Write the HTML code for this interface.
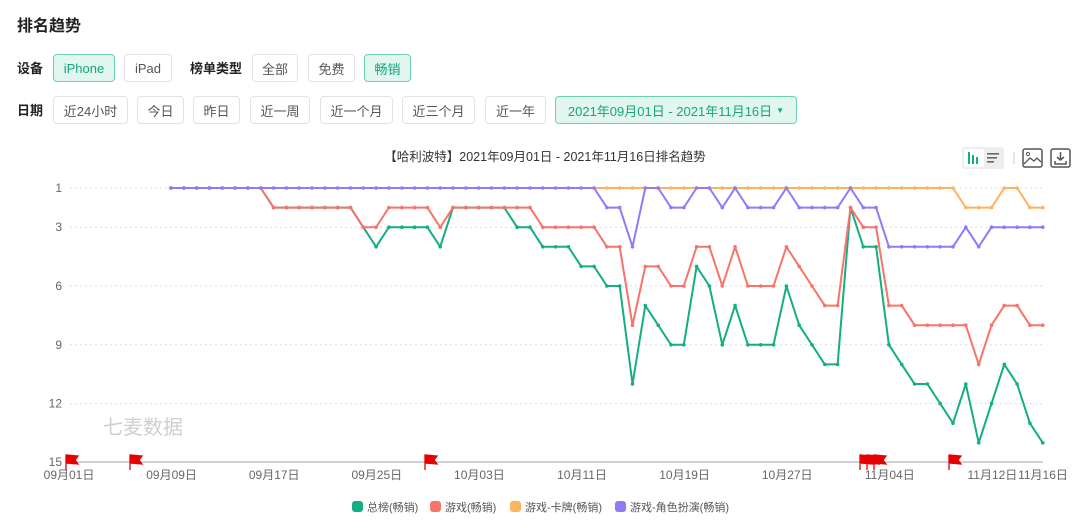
<!DOCTYPE html>
<html><head><meta charset="utf-8"><style>
*{margin:0;padding:0;box-sizing:border-box}
body{width:1080px;height:528px;background:#fff;font-family:"Liberation Sans","Noto Sans CJK SC",sans-serif;color:#333;position:relative;overflow:hidden}
.a{position:absolute}
.t{left:17px;top:12px;font-size:16px;font-weight:bold;color:#222}
.lb{font-size:13px;font-weight:bold;color:#222;line-height:16px}
.b{position:absolute;height:28px;border:1px solid #e3e3e3;border-radius:4px;font-size:13px;color:#555;display:flex;align-items:center;justify-content:center;background:#fff}
.on{background:#e0f6ef;border-color:#6bd1b2;color:#15a57c}
</style></head><body>
<div class="a t">排名趋势</div>
<div class="a lb" style="left:17px;top:61px">设备</div>
<div class="b on" style="left:53px;top:54px;width:62px">iPhone</div>
<div class="b" style="left:124px;top:54px;width:48px">iPad</div>
<div class="a lb" style="left:190px;top:61px">榜单类型</div>
<div class="b" style="left:252px;top:54px;width:46px">全部</div>
<div class="b" style="left:308px;top:54px;width:47px">免费</div>
<div class="b on" style="left:364px;top:54px;width:47px">畅销</div>
<div class="a lb" style="left:17px;top:103px">日期</div>
<div class="b" style="left:53px;top:96px;width:75px">近24小时</div>
<div class="b" style="left:137px;top:96px;width:47px">今日</div>
<div class="b" style="left:193px;top:96px;width:47px">昨日</div>
<div class="b" style="left:250px;top:96px;width:60px">近一周</div>
<div class="b" style="left:320px;top:96px;width:73px">近一个月</div>
<div class="b" style="left:402px;top:96px;width:73px">近三个月</div>
<div class="b" style="left:485px;top:96px;width:61px">近一年</div>
<div class="b on" style="left:555px;top:96px;width:242px">2021年09月01日 - 2021年11月16日 <span style="font-size:8px;margin-left:4px">▼</span></div>
<svg class="a" style="left:0;top:0" width="1080" height="528" id="s"></svg>
<script>
var P=[],R=[],G=[],O=[];
function rep(a,v,n){for(var i=0;i<n;i++)a.push(v)}
rep(P,1,33);P=P.concat([1,2,2,4,1,1,2,2,1,1,2,1,2,2,2,1,2,2,2,2,1,2,2,4,4,4,4,4,4,3,4,3,3,3,3,3]);
rep(R,1,8);rep(R,2,7);rep(R,3,2);rep(R,2,4);rep(R,3,1);rep(R,2,7);rep(R,3,4);
R=R.concat([3,4,4,8,5,5,6,6,4,4,6,4,6,6,6,4,5,6,7,7,2,3,3,7,7,8,8,8,8,8,10,8,7,7,8,8]);
rep(G,1,8);rep(G,2,7);rep(G,3,1);rep(G,4,1);rep(G,3,4);rep(G,4,1);rep(G,2,5);rep(G,3,2);rep(G,4,3);rep(G,5,1);
G=G.concat([5,6,6,11,7,8,9,9,5,6,9,7,9,9,9,6,8,9,10,10,2,4,4,9,10,11,11,12,13,11,14,12,10,11,13,14]);
rep(O,null,33);rep(O,1,29);O=O.concat([2,2,2,1,1,2,2]);
function X(k){return 171+k*12.82}
function Y(r){return 188+(r-1)*19.6}
var h='';
[[1,'1'],[3,'3'],[6,'6'],[9,'9'],[12,'12']].forEach(function(g){var y=Y(g[0]);
h+='<line x1="70" x2="1043" y1="'+y+'" y2="'+y+'" stroke="#ddd" stroke-dasharray="2,3"/>';
h+='<text x="62" y="'+(y+4)+'" font-size="12" fill="#666" text-anchor="end">'+g[1]+'</text>';});
h+='<text x="62" y="466" font-size="12" fill="#666" text-anchor="end">15</text>';
h+='<line x1="66" x2="1043" y1="462" y2="462" stroke="#cdd0d6" stroke-width="2"/>';
var labs=['09月01日','09月09日','09月17日','09月25日','10月03日','10月11日','10月19日','10月27日','11月04日','11月12日'];
labs.forEach(function(l,i){h+='<text x="'+(69+i*102.6)+'" y="479" font-size="12" fill="#666" text-anchor="middle">'+l+'</text>'});
h+='<text x="1043" y="479" font-size="12" fill="#666" text-anchor="middle">11月16日</text>';
h+='<text x="103" y="434" font-size="20" fill="#cfcfcf">七麦数据</text>';
h+='<text x="545" y="161" font-size="12.5" fill="#333" text-anchor="middle">【哈利波特】2021年09月01日 - 2021年11月16日排名趋势</text>';
function ser(a,c){var d='',c2='';a.forEach(function(v,k){if(v==null)return;d+=(d?'L':'M')+X(k).toFixed(1)+' '+Y(v).toFixed(1);c2+='<circle cx="'+X(k).toFixed(1)+'" cy="'+Y(v).toFixed(1)+'" r="1.8" fill="'+c+'"/>'});
return '<path d="'+d+'" fill="none" stroke="'+c+'" stroke-width="2" stroke-linejoin="round"/>'+c2}
h+=ser(G,'#14ad84')+ser(R,'#f8736a')+ser(O,'#fdb35f')+ser(P,'#8e7cf7');
[66,130,425,860,867,874,949].forEach(function(x){h+='<path d="M'+x+' 470 L'+x+' 455 L'+(x+12)+' 456 L'+(x+9)+' 460 L'+(x+12)+' 464 L'+x+' 463" fill="#e60000" stroke="#e60000" stroke-width="1.3"/>'});
var L=[['总榜(畅销)','#14ad84',352],['游戏(畅销)','#f8736a',430],['游戏-卡牌(畅销)','#fdb35f',510],['游戏-角色扮演(畅销)','#8e7cf7',615]];
L.forEach(function(l){h+='<rect x="'+l[2]+'" y="501" width="11" height="11" rx="3" fill="'+l[1]+'"/><text x="'+(l[2]+15)+'" y="511" font-size="11" fill="#555">'+l[0]+'</text>'});
h+='<rect x="962" y="147" width="42" height="22" rx="3" fill="#eee"/><rect x="964" y="149" width="20" height="18" rx="2" fill="#fff"/>';
h+='<rect x="968" y="152" width="2" height="12" fill="#14ad84"/><rect x="972" y="155" width="2" height="9" fill="#14ad84"/><rect x="976" y="157" width="2" height="7" fill="#14ad84"/>';
h+='<rect x="987" y="153" width="12" height="1.6" fill="#666"/><rect x="987" y="157" width="10" height="1.6" fill="#666"/><rect x="987" y="161" width="7" height="1.6" fill="#666"/>';
h+='<line x1="1014" y1="152" x2="1014" y2="164" stroke="#ccc"/>';
h+='<rect x="1023" y="149" width="19" height="18" rx="2" fill="none" stroke="#555" stroke-width="1.5"/><circle cx="1028" cy="154" r="1.6" fill="none" stroke="#555"/><path d="M1024 164 L1030 158 L1034 161 L1037 158 L1041 162" fill="none" stroke="#555" stroke-width="1.3"/>';
h+='<rect x="1051" y="149" width="19" height="18" rx="2" fill="none" stroke="#555" stroke-width="1.5"/><path d="M1060.5 152 V160 M1057 157 L1060.5 160 L1064 157 M1055 161 V164 H1066 V161" fill="none" stroke="#555" stroke-width="1.5"/>';
document.getElementById('s').innerHTML=h;
</script>
</body></html>
